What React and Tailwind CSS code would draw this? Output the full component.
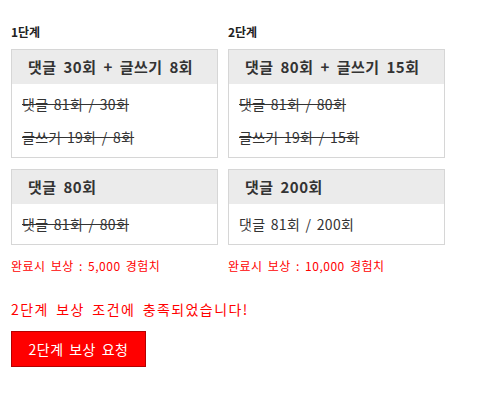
const stages = [
  {
    label: '1단계',
    width: 'w-[207px]',
    reward: '완료시 보상 : 5,000 경험치',
    boxes: [
      { title: '댓글 30회 + 글쓰기 8회', rows: [{ text: '댓글 81회 / 30회', done: true }, { text: '글쓰기 19회 / 8회', done: true }] },
      { title: '댓글 80회', rows: [{ text: '댓글 81회 / 80회', done: true }] },
    ],
  },
  {
    label: '2단계',
    width: 'w-[217px]',
    reward: '완료시 보상 : 10,000 경험치',
    boxes: [
      { title: '댓글 80회 + 글쓰기 15회', rows: [{ text: '댓글 81회 / 80회', done: true }, { text: '글쓰기 19회 / 15회', done: true }] },
      { title: '댓글 200회', rows: [{ text: '댓글 81회 / 200회', done: false }] },
    ],
  },
]

function MissionBox({ box, first }) {
  return (
    <div className={`border border-[#d6d6d6] bg-white ${first ? '' : 'mt-[11px]'}`}>
      <div className="h-[34px] bg-[#ebebeb] px-[16px] flex items-center text-[15px] font-bold text-[#333] whitespace-nowrap tracking-[0.5px] [word-spacing:3px]">
        {box.title}
      </div>
      <div className="px-[10px] pt-[4px] pb-[3px]">
        {box.rows.map((row) => (
          <p
            key={row.text}
            className={`leading-[33px] text-[14px] text-[#333] whitespace-nowrap tracking-[0.3px] [word-spacing:2px] ${row.done ? 'line-through' : ''}`}
          >
            {row.text}
          </p>
        ))}
      </div>
    </div>
  )
}

export default function App() {
  return (
    <div
      className="bg-white min-h-[403px] px-[11px] pt-[24px]"
      style={{ fontFamily: '"Noto Sans CJK KR", "Noto Sans", sans-serif' }}
    >
      <div className="flex items-start gap-[10px]">
        {stages.map((stage) => (
          <div key={stage.label} className={stage.width}>
            <h3 className="text-[12px] leading-[16px] font-bold text-[#222] mb-[9px]">{stage.label}</h3>
            {stage.boxes.map((box, i) => (
              <MissionBox key={box.title} box={box} first={i === 0} />
            ))}
            <p className="mt-[13px] text-[12px] leading-[16px] text-[#ff0000] whitespace-nowrap tracking-[0.5px] [word-spacing:2px]">
              {stage.reward}
            </p>
          </div>
        ))}
      </div>
      <p className="mt-[25px] text-[14px] leading-[20px] text-[#ff0000] tracking-[1.4px] [word-spacing:3px]">
        2단계 보상 조건에 충족되었습니다!
      </p>
      <button className="mt-[12px] w-[135px] h-[36px] bg-[#ff0000] border border-[#b50000] text-white text-[14px] tracking-[0.5px] [word-spacing:2px]">
        2단계 보상 요청
      </button>
    </div>
  )
}
